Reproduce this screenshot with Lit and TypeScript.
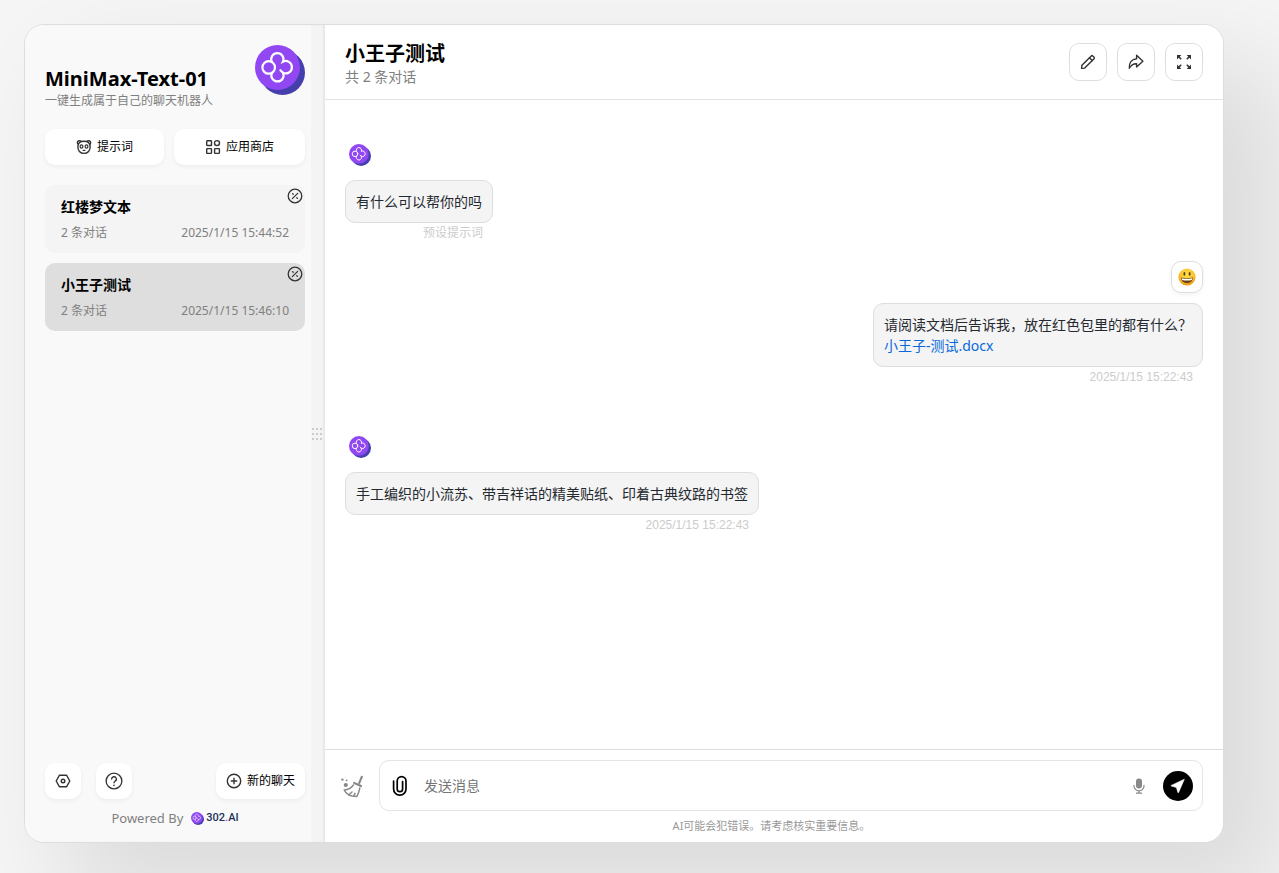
import { LitElement, html, css, svg } from "lit";
import { customElement, property, state } from "lit/decorators.js";
import { classMap } from "lit/directives/class-map.js";

const reset = css`
  *,
  *::before,
  *::after {
    box-sizing: border-box;
  }
  button,
  input {
    font: inherit;
    color: inherit;
    margin: 0;
    border: none;
    background: none;
  }
  button {
    cursor: pointer;
  }
  svg {
    display: block;
    flex: none;
  }
`;

const stroke = (body: unknown, size = 16) => html`<svg
  width=${size}
  height=${size}
  viewBox="0 0 16 16"
  fill="none"
  stroke="#333"
  stroke-width="1.4"
  stroke-linecap="round"
  stroke-linejoin="round"
  aria-hidden="true"
>
  ${body}
</svg>`;

const icons = {
  mask: stroke(svg`
    <circle cx="3.4" cy="3.7" r="2" />
    <circle cx="12.6" cy="3.7" r="2" />
    <path d="M1.9 7.2 C2.1 3.9 4.8 2.3 8 2.3 C11.2 2.3 13.9 3.9 14.1 7.2 C14.6 11.6 11.6 14.4 8 14.4 C4.4 14.4 1.4 11.6 1.9 7.2 Z" fill="#fff" />
    <ellipse cx="5.5" cy="7.5" rx="1.4" ry="1.7" stroke-width="1.2" />
    <ellipse cx="10.5" cy="7.5" rx="1.4" ry="1.7" stroke-width="1.2" />
    <path d="M7.2 11.4 H8.8" />`),
  apps: stroke(svg`
    <rect x="1.7" y="1.7" width="4.8" height="4.8" rx=".6" />
    <circle cx="12" cy="4.1" r="2.5" />
    <rect x="1.7" y="9.6" width="4.8" height="4.8" rx=".6" />
    <rect x="9.6" y="9.6" width="4.8" height="4.8" rx=".6" />`),
  remove: stroke(svg`
    <circle cx="8" cy="8" r="6.8" stroke-width="1.3" />
    <path d="M5.3 10.7 L10.7 5.3" stroke-width="1.2" />
    <path d="M5.6 5.6 L6.2 6.2 M9.8 9.8 L10.4 10.4" stroke-width="1.3" />`),
  settings: stroke(svg`
    <path d="M4.5 2.2 H11.5 L14.8 8 L11.5 13.8 H4.5 L1.2 8 Z" />
    <circle cx="8" cy="8" r="1.8" />`),
  help: stroke(svg`
    <circle cx="8" cy="8" r="7" stroke-width="1.2" />
    <path d="M5.9 6.3 A2.1 2.1 0 1 1 8.9 8.2 C8.2 8.6 8 8.9 8 9.6" stroke-width="1.2" />
    <path d="M8 11.8 V11.9" />`, 18),
  add: stroke(svg`
    <circle cx="8" cy="8" r="6.7" />
    <path d="M8 5.3 V10.7 M5.3 8 H10.7" />`),
  edit: stroke(svg`
    <path d="M1.6 14.4 L1.9 11.3 L11.3 1.9 A1 1 0 0 1 12.7 1.9 L14.1 3.3 A1 1 0 0 1 14.1 4.7 L4.7 14.1 Z" />
    <path d="M9.4 3.8 L12.2 6.6" />`),
  share: stroke(svg`
    <path d="M8.6 1.3 L14.9 7.2 L8.6 12.9 V9.7 C5.6 9.5 3.4 10.6 1.3 14.2 C.9 8.6 4 5.2 8.6 4.8 Z" />`),
  expand: html`<svg width="16" height="16" viewBox="0 0 16 16" fill="#333" stroke="#333" stroke-width="1.5" aria-hidden="true">
    <path d="M1 1 H5.4 L1 5.4 Z M15 1 H10.6 L15 5.4 Z M1 15 H5.4 L1 10.6 Z M15 15 H10.6 L15 10.6 Z" stroke="none" />
    <path d="M2.4 2.4 L5.2 5.2 M13.6 2.4 L10.8 5.2 M2.4 13.6 L5.2 10.8 M13.6 13.6 L10.8 10.8" />
  </svg>`,
  drag: html`<svg width="10" height="12" viewBox="0 0 10 12" fill="#ccc" aria-hidden="true">
    <path d="M0 0h2v2H0z M4 0h2v2H4z M8 0h2v2H8z M0 5h2v2H0z M4 5h2v2H4z M8 5h2v2H8z M0 10h2v2H0z M4 10h2v2H4z M8 10h2v2H8z" />
  </svg>`,
  broom: html`<svg width="24" height="24" viewBox="0 0 24 24" fill="none" stroke="#888" stroke-width="1.5" stroke-linecap="round" stroke-linejoin="round" aria-hidden="true">
    <path d="M21.8 2.8 L19.2 9" stroke-width="2.1" />
    <path d="M14.2 9 L21 12" stroke-width="2.2" />
    <path d="M13.4 11 C11.2 14 8 15.8 4.2 16 C6 20 10.6 22.6 16.8 22.6 C18.4 19.6 19.4 17 19.8 14" />
    <path d="M9.4 20.2 L12 18 M13.8 21.8 L15 19.4" />
    <circle cx="5.8" cy="11" r="2.1" fill="#888" stroke="none" />
    <circle cx="2.4" cy="5.6" r="1.2" fill="#888" stroke="none" />
    <circle cx="6.6" cy="6.4" r=".9" fill="#888" stroke="none" />
  </svg>`,
  clip: html`<svg width="16" height="22" viewBox="0 0 16 22" fill="none" stroke="#000" stroke-width="1.7" stroke-linecap="round" aria-hidden="true">
    <path d="M1.6 6 V14 A6.2 6.2 0 0 0 14 14 V6 A4.4 4.4 0 0 0 5.2 6 V14 A2.7 2.7 0 0 0 10.6 14 V6.6" />
  </svg>`,
  mic: html`<svg width="12" height="16" viewBox="0 0 12 16" fill="none" stroke="#888" stroke-width="1.2" stroke-linecap="round" aria-hidden="true">
    <rect x="3" y=".4" width="6" height="10.2" rx="3" fill="#888" stroke="none" />
    <path d="M1 7.4 V8 A5 4.8 0 0 0 11 8 V7.4 M6 12.8 V15 M3.4 15.2 H8.6" />
  </svg>`,
  send: html`<svg width="30" height="30" viewBox="0 0 30 30" aria-hidden="true">
    <circle cx="15" cy="15" r="15" fill="#000" />
    <path d="M21.3 8.3 L8.2 14.4 Q7.6 14.8 8.3 15.1 L13.4 16.4 L14.9 21.5 Q15.2 22.2 15.6 21.5 Z" fill="#fff" stroke="#fff" stroke-width=".6" stroke-linejoin="round" />
  </svg>`,
  smile: html`<svg width="18" height="18" viewBox="0 0 18 18" role="img" aria-label="😃">
    <defs>
      <radialGradient id="face" cx=".5" cy=".35" r=".65">
        <stop offset="0" stop-color="#ffe34a" />
        <stop offset=".65" stop-color="#fbc12c" />
        <stop offset="1" stop-color="#ee9012" />
      </radialGradient>
    </defs>
    <circle cx="9" cy="9" r="8.6" fill="url(#face)" />
    <ellipse cx="6.4" cy="5.9" rx="1" ry="1.8" fill="#5b3a12" />
    <ellipse cx="11.6" cy="5.9" rx="1" ry="1.8" fill="#5b3a12" />
    <path d="M3 9.6 Q9 11.2 15 9.6 Q14.4 15.2 9 15.2 Q3.6 15.2 3 9.6 Z" fill="#6b4315" />
    <path d="M3.8 10.3 Q9 11.6 14.2 10.3 L13.9 11.9 Q9 13.2 4.1 11.9 Z" fill="#fff" />
  </svg>`,
};

@customElement("brand-mark")
export class BrandMark extends LitElement {
  @property({ type: Number }) size = 50;

  static styles = css`
    :host {
      display: block;
      flex: none;
    }
    svg {
      display: block;
    }
  `;

  render() {
    return html`<svg width=${this.size} height=${this.size} viewBox="0 0 50 50" aria-hidden="true">
      <circle cx="27.5" cy="27.5" r="22.5" fill="#453fae" />
      <circle cx="22.5" cy="22.5" r="22.5" fill="#9147f2" />
      <g fill="none" stroke="#fff" stroke-width="2.2" stroke-linecap="round">
        <circle cx="13.7" cy="22.4" r="6.3" />
        <path d="M16.8 16.7 A6.1 6.1 0 1 1 27.9 16.7 A6.2 6.2 0 1 1 28 27.8 L25.4 25.2" />
        <path d="M16.8 28.1 A6.1 6.1 0 1 0 28 27.8" />
      </g>
    </svg>`;
  }
}

interface Session {
  title: string;
  count: string;
  time: string;
}

@customElement("chat-sidebar")
export class ChatSidebar extends LitElement {
  @state() selected = 1;

  sessions: Session[] = [
    { title: "红楼梦文本", count: "2 条对话", time: "2025/1/15 15:44:52" },
    { title: "小王子测试", count: "2 条对话", time: "2025/1/15 15:46:10" },
  ];

  static styles = [
    reset,
    css`
      :host {
        display: flex;
        flex: none;
        width: 300px;
        background: #f9f9f9;
        box-shadow: inset -2px 0 2px rgba(0, 0, 0, 0.05);
        position: relative;
      }
      .column {
        flex: 1;
        min-width: 0;
        display: flex;
        flex-direction: column;
        padding: 20px 20px 15px;
      }
      .header {
        display: flex;
        justify-content: space-between;
        align-items: flex-start;
        margin-bottom: 20px;
      }
      .names {
        padding-top: 20px;
      }
      .title {
        margin: 0;
        font-size: 20px;
        line-height: 28px;
        font-weight: 700;
      }
      .subtitle {
        font-size: 12px;
        line-height: 16px;
        color: #808080;
      }
      .shortcuts {
        display: flex;
        gap: 10px;
        margin-bottom: 20px;
      }
      .button {
        display: flex;
        align-items: center;
        justify-content: center;
        gap: 5px;
        height: 36px;
        padding: 10px;
        border-radius: 10px;
        background: #fff;
        box-shadow: 0 2px 4px rgba(0, 0, 0, 0.05);
        font-size: 12px;
        line-height: 16px;
      }
      .square {
        width: 36px;
        padding: 0;
      }
      .shortcuts .button {
        flex: 1 1 auto;
      }
      .list {
        flex: 1;
        margin: 0;
        padding: 0;
        list-style: none;
        display: flex;
        flex-direction: column;
        gap: 10px;
      }
      .session {
        position: relative;
      }
      .open {
        display: block;
        width: 100%;
        padding: 12px 16px;
        border-radius: 10px;
        background: #f4f4f4;
        text-align: left;
      }
      .open.selected {
        background: #dedede;
      }
      .name {
        display: block;
        font-size: 14px;
        line-height: 20px;
        font-weight: 700;
      }
      .meta {
        display: flex;
        justify-content: space-between;
        margin-top: 8px;
        font-size: 12px;
        line-height: 16px;
        color: #808080;
      }
      .remove {
        position: absolute;
        top: 3px;
        right: 2px;
        padding: 0;
      }
      .actions {
        display: flex;
        gap: 15px;
      }
      .new {
        margin-left: auto;
      }
      .powered {
        display: flex;
        justify-content: center;
        align-items: center;
        gap: 8px;
        margin-top: 10px;
        font-size: 13px;
        line-height: 18px;
        color: #808080;
      }
      .brand {
        display: flex;
        align-items: center;
        gap: 2px;
        color: #22315b;
        font-family: Roboto, sans-serif;
        font-size: 11px;
        font-weight: 500;
        text-decoration: none;
      }
      .dot {
        color: #a53df0;
      }
      .handle {
        position: absolute;
        top: 0;
        right: 0;
        bottom: 0;
        width: 14px;
        padding: 0 1px;
        display: flex;
        align-items: center;
        background: rgba(0, 0, 0, 0.02);
        cursor: ew-resize;
      }
    `,
  ];

  render() {
    return html`
      <div class="column">
        <div class="header">
          <div class="names">
            <h1 class="title">MiniMax-Text-01</h1>
            <div class="subtitle">一键生成属于自己的聊天机器人</div>
          </div>
          <brand-mark size="50"></brand-mark>
        </div>
        <div class="shortcuts">
          <button class="button">${icons.mask}提示词</button>
          <button class="button">${icons.apps}应用商店</button>
        </div>
        <ul class="list">
          ${this.sessions.map(
            (s, i) => html`<li class="session">
              <button
                class=${classMap({ open: true, selected: i === this.selected })}
                @click=${() => (this.selected = i)}
              >
                <span class="name">${s.title}</span>
                <span class="meta"><span>${s.count}</span><span>${s.time}</span></span>
              </button>
              <button class="remove" aria-label="删除">${icons.remove}</button>
            </li>`
          )}
        </ul>
        <div class="actions">
          <button class="button square" aria-label="设置">${icons.settings}</button>
          <button class="button square" aria-label="帮助">${icons.help}</button>
          <button class="button new">${icons.add}新的聊天</button>
        </div>
        <div class="powered">
          <span>Powered By</span>
          <a class="brand" href="#"><brand-mark size="13"></brand-mark><span>302<span class="dot">.</span>AI</span></a>
        </div>
      </div>
      <div class="handle">${icons.drag}</div>
    `;
  }
}

interface Message {
  from: "bot" | "user";
  text: string;
  file?: string;
  note: string;
}

@customElement("chat-panel")
export class ChatPanel extends LitElement {
  messages: Message[] = [
    { from: "bot", text: "有什么可以帮你的吗", note: "预设提示词" },
    {
      from: "user",
      text: "请阅读文档后告诉我，放在红色包里的都有什么？",
      file: "小王子-测试.docx",
      note: "2025/1/15 15:22:43",
    },
    {
      from: "bot",
      text: "手工编织的小流苏、带吉祥话的精美贴纸、印着古典纹路的书签",
      note: "2025/1/15 15:22:43",
    },
  ];

  static styles = [
    reset,
    css`
      :host {
        flex: 1;
        min-width: 0;
        display: flex;
        flex-direction: column;
        background: #fff;
      }
      .header {
        display: flex;
        align-items: center;
        justify-content: space-between;
        padding: 14px 20px;
        border-bottom: 1px solid #e2e2e2;
      }
      .title {
        margin: 0;
        font-size: 20px;
        line-height: 30px;
        font-weight: 700;
      }
      .count {
        font-size: 14px;
        line-height: 16px;
        color: #808080;
      }
      .tools {
        display: flex;
        gap: 10px;
      }
      .tool {
        display: flex;
        align-items: center;
        justify-content: center;
        width: 38px;
        height: 38px;
        padding: 0;
        border: 1px solid #dedede;
        border-radius: 10px;
        background: #fff;
      }
      .log {
        flex: 1;
        padding: 13px 20px 20px;
      }
      .message {
        display: flex;
        flex-direction: column;
        align-items: flex-start;
        margin-bottom: 18px;
      }
      .message.bot {
        padding-top: 27px;
      }
      .message.user {
        align-items: flex-end;
      }
      .avatar {
        display: flex;
        align-items: center;
        justify-content: center;
        width: 30px;
        height: 30px;
        margin-bottom: 10px;
      }
      .user .avatar {
        width: 32px;
        height: 32px;
        border: 1px solid #dedede;
        border-radius: 10px;
        box-shadow: 0 2px 4px rgba(0, 0, 0, 0.05);
      }
      .body {
        max-width: 80%;
      }
      .bubble {
        padding: 10px;
        border: 1px solid #dedede;
        border-radius: 10px;
        background: #f4f4f4;
        font-size: 14px;
        line-height: 21px;
        color: #24292f;
      }
      .text {
        margin: 0;
      }
      .file {
        display: block;
        color: #0969da;
        text-decoration: none;
      }
      .note {
        padding-right: 10px;
        font-family: "Liberation Sans", "Noto Sans CJK SC", sans-serif;
        font-size: 12px;
        line-height: 20px;
        text-align: right;
        color: #ccc;
      }
      .composer {
        border-top: 1px solid #dedede;
        padding: 10px 20px 7px 15px;
      }
      .row {
        display: flex;
        align-items: center;
        gap: 15px;
      }
      .clear {
        padding: 0;
      }
      .field {
        flex: 1;
        display: flex;
        align-items: center;
        height: 51px;
        padding: 0 9px 0 12px;
        border: 1px solid #e4e4e4;
        border-radius: 10px;
      }
      .field button {
        padding: 0;
      }
      .input {
        flex: 1;
        min-width: 0;
        padding: 0;
        margin: 0 16px;
        outline: none;
        font-size: 14px;
        line-height: 21px;
      }
      .input::placeholder {
        color: #757575;
        opacity: 1;
      }
      .voice {
        margin-right: 18px;
      }
      .hint {
        margin-top: 6px;
        font-size: 11px;
        line-height: 18px;
        text-align: center;
        color: #999;
      }
    `,
  ];

  render() {
    return html`
      <header class="header">
        <div>
          <h2 class="title">小王子测试</h2>
          <div class="count">共 2 条对话</div>
        </div>
        <div class="tools">
          <button class="tool" aria-label="编辑">${icons.edit}</button>
          <button class="tool" aria-label="分享">${icons.share}</button>
          <button class="tool" aria-label="全屏">${icons.expand}</button>
        </div>
      </header>
      <main class="log">
        ${this.messages.map(
          (m) => html`<article class="message ${m.from}">
            <div class="avatar">
              ${m.from === "bot" ? html`<brand-mark size="22"></brand-mark>` : icons.smile}
            </div>
            <div class="body">
              <div class="bubble">
                <p class="text">${m.text}</p>
                ${m.file ? html`<a class="file" href="#">${m.file}</a>` : null}
              </div>
              <div class="note">${m.note}</div>
            </div>
          </article>`
        )}
      </main>
      <footer class="composer">
        <div class="row">
          <button class="clear" aria-label="清除">${icons.broom}</button>
          <div class="field">
            <button aria-label="附件">${icons.clip}</button>
            <input class="input" type="text" placeholder="发送消息" aria-label="发送消息" />
            <button class="voice" aria-label="语音">${icons.mic}</button>
            <button aria-label="发送">${icons.send}</button>
          </div>
        </div>
        <div class="hint">AI可能会犯错误。请考虑核实重要信息。</div>
      </footer>
    `;
  }
}

@customElement("app-root")
export class AppRoot extends LitElement {
  static styles = [
    reset,
    css`
      :host {
        display: flex;
        box-sizing: border-box;
        min-height: 100vh;
        padding: 24px 55px 30px 24px;
        overflow: hidden;
        background: #f5f5f5;
        color: #000;
        font-family: "Noto Sans", "Noto Sans CJK SC", sans-serif;
        font-size: 14px;
      }
      .window {
        flex: 1;
        min-width: 0;
        display: flex;
        overflow: hidden;
        border: 1px solid #dedede;
        border-radius: 20px;
        background: #fff;
        box-shadow: 50px 50px 100px 10px rgba(0, 0, 0, 0.1);
      }
    `,
  ];

  render() {
    return html`<div class="window">
      <chat-sidebar></chat-sidebar>
      <chat-panel></chat-panel>
    </div>`;
  }
}
